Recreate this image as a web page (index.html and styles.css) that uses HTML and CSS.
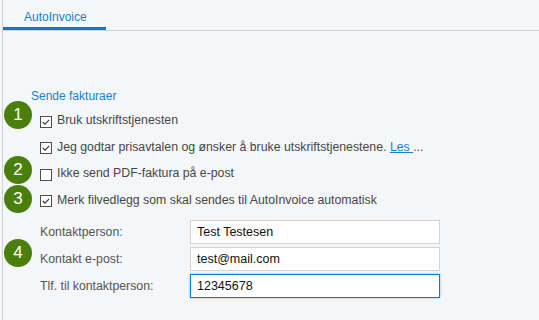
FILE: index.html
```html
<!DOCTYPE html>
<html lang="nb">
<head>
    <meta charset="UTF-8">
    <title>AutoInvoice</title>
    <link rel="stylesheet" href="styles.css">
</head>
<body>
    <div class="page">
        <!-- Tabs -->
        <div class="tabs">
            <div class="tab active">AutoInvoice</div>
        </div>

        <!-- Step markers -->
        <div class="step step-1">1</div>
        <div class="step step-2">2</div>
        <div class="step step-3">3</div>
        <div class="step step-4">4</div>

        <section class="send">
            <h2>Sende fakturaer</h2>

            <div class="check-row">
                <span class="box checked"><svg viewBox="0 0 12 12"><path d="M2.2 6 L4.8 8.6 L9.8 3.5" /></svg></span>
                <span>Bruk utskriftstjenesten</span>
            </div>
            <div class="check-row">
                <span class="box checked"><svg viewBox="0 0 12 12"><path d="M2.2 6 L4.8 8.6 L9.8 3.5" /></svg></span>
                <span>Jeg godtar prisavtalen og ønsker å bruke utskriftstjenestene. <a href="#">Les </a>...</span>
            </div>
            <div class="check-row">
                <span class="box"></span>
                <span>Ikke send PDF-faktura på e-post</span>
            </div>
            <div class="check-row">
                <span class="box checked"><svg viewBox="0 0 12 12"><path d="M2.2 6 L4.8 8.6 L9.8 3.5" /></svg></span>
                <span>Merk filvedlegg som skal sendes til AutoInvoice automatisk</span>
            </div>

            <!-- Contact fields -->
            <div class="contact">
                <div class="field">
                    <label>Kontaktperson:</label>
                    <input type="text" value="Test Testesen">
                </div>
                <div class="field">
                    <label>Kontakt e-post:</label>
                    <input type="text" value="test@mail.com">
                </div>
                <div class="field">
                    <label>Tlf. til kontaktperson:</label>
                    <input type="text" class="focused" value="12345678">
                </div>
            </div>
        </section>
    </div>
</body>
</html>
```

FILE: styles.css
```css
/* General */
body {
    margin: 0;
    background-color: #f5f6f8;
    font-family: "Liberation Sans", Arial, sans-serif;
    font-size: 12.3px;
    line-height: 14px;
    color: #474747;
}

.page {
    position: relative;
    margin-left: 2px;
    min-height: 320px;
    border-left: 1px solid #cfd1d4;
}

/* Tabs */
.tabs {
    display: flex;
    border-bottom: 1px solid #cfd1d4;
}

.tab {
    padding: 10px 19px 3px 21px;
    font-size: 12px;
    color: #1a7fd4;
}

.tab.active {
    border-bottom: 3px solid #0a7ad0;
}

/* Step markers */
.step {
    position: absolute;
    left: 1px;
    width: 28px;
    height: 28px;
    border-radius: 50%;
    background-color: #4b7f0c;
    color: #fff;
    font-size: 17px;
    line-height: 28px;
    text-align: center;
}

.step-1 { top: 101px; }
.step-2 { top: 156px; }
.step-3 { top: 185px; }
.step-4 { top: 239px; }

/* Send section */
.send {
    padding: 58px 0 0 28px;
}

.send h2 {
    margin: 0 0 4px 0;
    font-size: 12px;
    font-weight: normal;
    color: #1a7fd4;
}

.check-row {
    display: flex;
    align-items: center;
    height: 26.5px;
    padding-left: 9px;
}

.box {
    width: 10px;
    height: 10px;
    margin: 3px 5px 0 0;
    border: 1px solid #4d4d4d;
    background-color: #fff;
    flex-shrink: 0;
}

.box svg {
    display: block;
    width: 10px;
    height: 10px;
}

.box path {
    fill: none;
    stroke: #333;
    stroke-width: 1.3;
}

.check-row a {
    color: #1a7fd4;
}

/* Contact fields */
.contact {
    margin-top: 7px;
    padding-left: 9px;
}

.field {
    display: flex;
    align-items: center;
    margin-bottom: 3px;
}

.field label {
    width: 150px;
    color: #555;
}

.field input {
    width: 250px;
    height: 24px;
    box-sizing: border-box;
    padding: 0 6px;
    border: 1px solid #d3d3d3;
    background-color: #fff;
    font-family: "Liberation Sans", Arial, sans-serif;
    font-size: 12.5px;
    color: #111;
    outline: none;
}

.field input.focused {
    border: 1px solid #0a7ad0;
    box-shadow: 0 0 2px rgba(10, 122, 208, 0.5);
}
```
